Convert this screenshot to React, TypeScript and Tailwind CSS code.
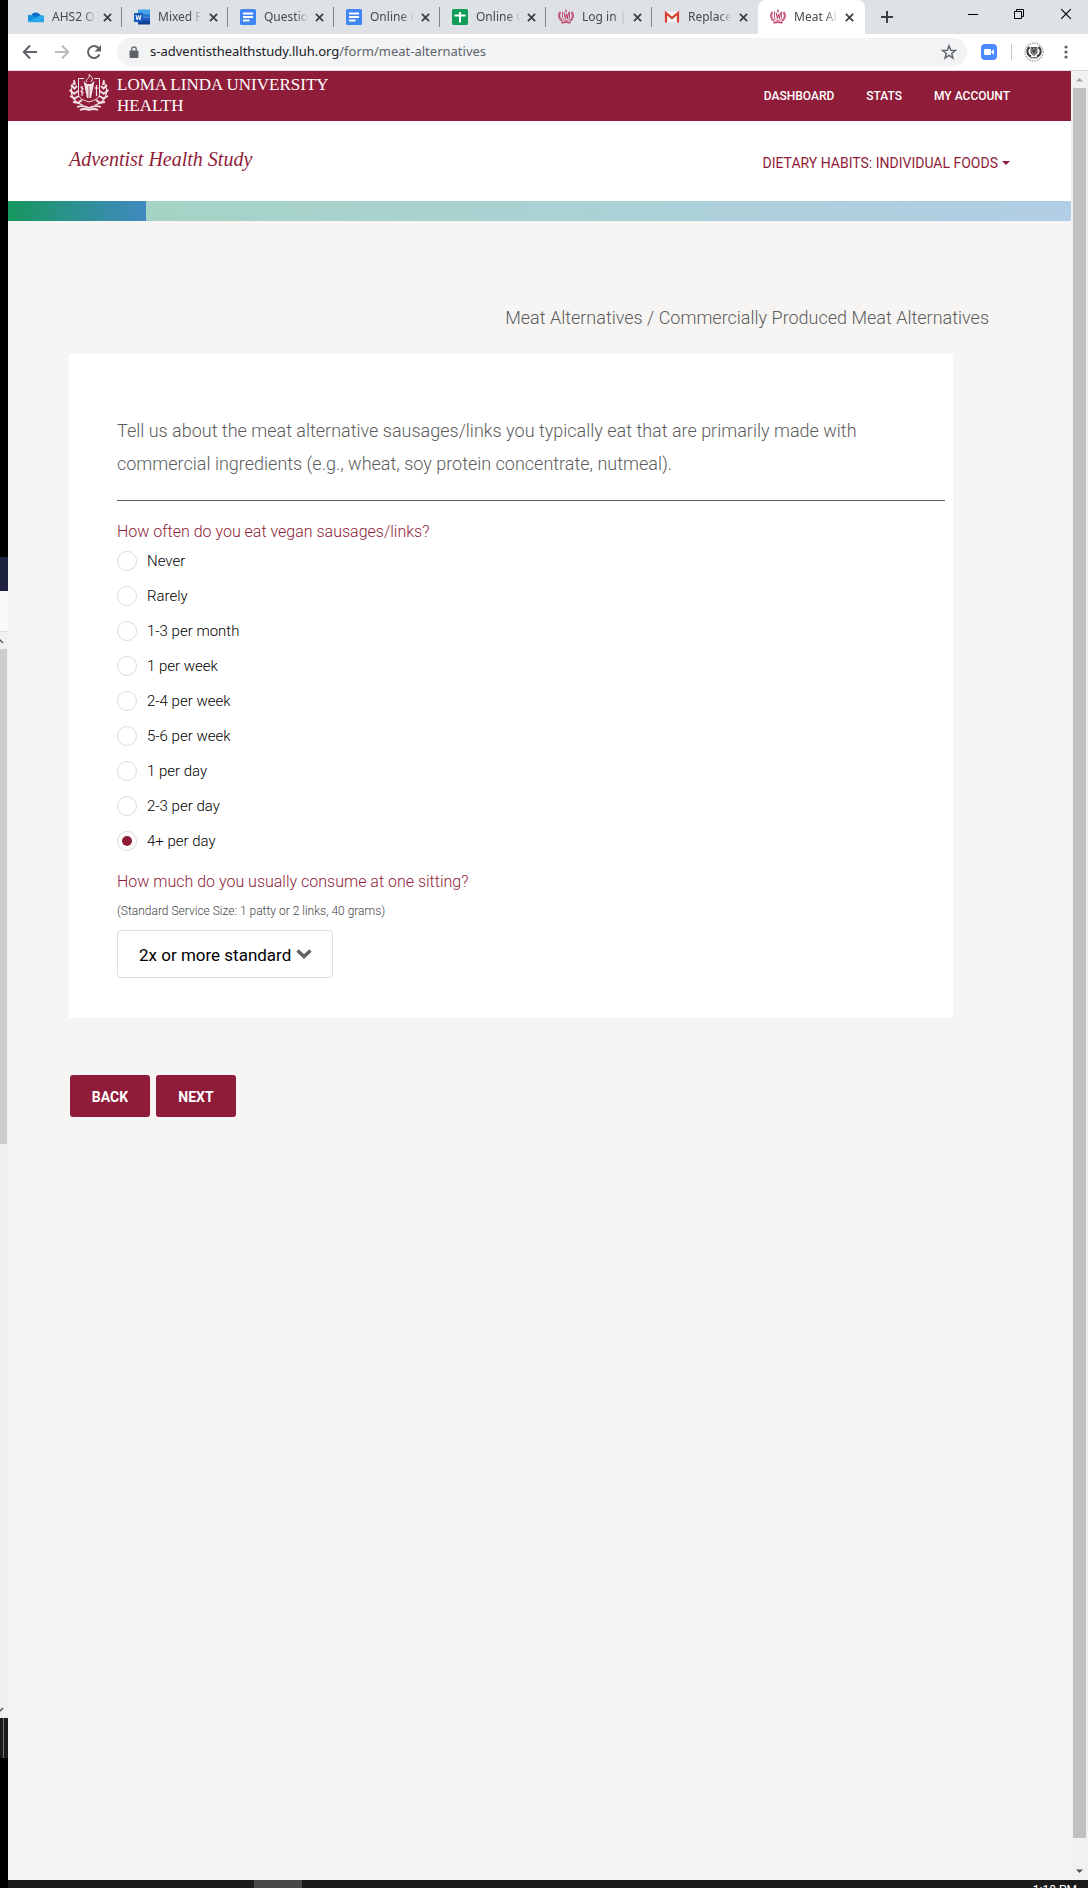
import { useState } from "react";
import type { ReactNode } from "react";

const frequencies = [
  "Never",
  "Rarely",
  "1-3 per month",
  "1 per week",
  "2-4 per week",
  "5-6 per week",
  "1 per day",
  "2-3 per day",
  "4+ per day",
];

const servings = ["Less than standard", "Standard", "2x or more standard"];

/* ---------- icons ---------- */

function Crest({ className }: { className?: string }) {
  return (
    <svg viewBox="0 0 40 38" className={className} fill="none" stroke="currentColor" aria-hidden="true">
      {/* laurel branches */}
      <path d="M5 8C0 17 2 28 14 31M35 8c5 9 3 20-9 23" strokeWidth="1.2" />
      <path
        d="M5 6l1 5M2 11l4 4M0.500 16l5 4M1 22l6 3M4 28l6 1M8 12l-3 3M9 17l-4 3M10 22l-4 2M13 26l-4 3M35 6l-1 5M38 11l-4 4M39.500 16l-5 4M39 22l-6 3M36 28l-6 1M32 12l3 3M31 17l4 3M30 22l4 2M27 26l4 3"
        strokeWidth="1.800"
      />
      {/* shield */}
      <path d="M15 4.500H9.500V20c0 4 4 6 10.500 8 6.500-2 10.500-4 10.500-8V4.500H25" strokeWidth="1" />
      {/* torch and flame */}
      <path d="M14.500 7l3.500 17h4l3.500-17-3.500 3h-4z" fill="currentColor" stroke="none" />
      <path d="M20 12v12" strokeWidth="0.800" className="stroke-[#8f1c39]" />
      <path d="M18 8c-3-3 4-3 2-7.500 4 2.500 4 5 2 7.500" strokeWidth="1" />
      {/* staff and cross */}
      <path d="M13 12v10M11.500 13l3 2M11.500 17l3 2M27.500 11v11M25.500 14h4" strokeWidth="1.200" />
      {/* ribbon */}
      <path d="M8 33c5-2 8-1 12 1 4-2 7-3 12-1M11 36c4-2 6-1 9 0 3-1 5-2 9 0" strokeWidth="1.800" />
    </svg>
  );
}

function CrestFavicon() {
  return (
    <svg viewBox="0 0 16 16" className="size-4 text-[#b8305a]" fill="none" stroke="currentColor" aria-hidden="true">
      <path d="M2.500 3C0 6 1 10.500 4.500 12M13.500 3c2.500 3 1.500 7.500-2 9" strokeWidth="2.200" opacity="0.750" />
      <path d="M4.500 2.500v6c0 1.500 1.500 2.500 3.500 3 2-.5 3.500-1.500 3.500-3v-6" strokeWidth="0.800" />
      <path d="M6 3.500l1.500 6L8.500 5l1 4.500L10.500 3.500" strokeWidth="1" />
      <path d="M8 0.500v3" strokeWidth="1.200" />
      <path d="M3.500 13.800c3-1 6-1 9 0" strokeWidth="1.800" opacity="0.850" />
    </svg>
  );
}

function OneDriveIcon() {
  return (
    <svg viewBox="1 2 14 12" className="size-4" aria-hidden="true">
      <path d="M4 6a4.500 4.500 0 0 1 8 1l-5 4z" fill="#0a6cc4" />
      <path d="M3.500 6.500A3 3 0 0 0 1 12l8-3-3-2.500z" fill="#1490df" />
      <path d="M11 7a3.200 3.200 0 0 1 3.500 5.500H2.500A3 3 0 0 1 1 12z" fill="#28a8ea" />
    </svg>
  );
}

function WordIcon() {
  return (
    <svg viewBox="0 0 16 16" className="size-4" aria-hidden="true">
      <rect x="4" y="0.500" width="12" height="4" fill="#41a5ee" />
      <rect x="4" y="4.500" width="12" height="4" fill="#2b7cd3" />
      <rect x="4" y="8.500" width="12" height="3.500" fill="#185abd" />
      <rect x="4" y="12" width="12" height="3.500" fill="#103f91" />
      <rect y="4" width="9" height="9" rx="0.500" fill="#185abd" />
      <path d="M2 6l1.200 5L4.500 6.500 5.800 11 7 6" fill="none" stroke="#fff" strokeWidth="1" />
    </svg>
  );
}

function DocsIcon() {
  return (
    <svg viewBox="0 0 16 16" className="size-4" aria-hidden="true">
      <rect width="16" height="16" rx="1.500" fill="#4285f4" />
      <path d="M3 4.500h10M3 8h10M3 11.500h6.500" stroke="#fff" strokeWidth="2" />
    </svg>
  );
}

function SheetsIcon() {
  return (
    <svg viewBox="0 0 16 16" className="size-4" aria-hidden="true">
      <rect width="16" height="16" rx="1.500" fill="#0f9d58" />
      <path d="M2.500 6.500h11M8 3v10.500" stroke="#fff" strokeWidth="2" />
    </svg>
  );
}

function GmailIcon() {
  return (
    <svg viewBox="0 0 16 16" className="size-4" aria-hidden="true">
      <rect x="1" y="2.500" width="14" height="11" rx="1" fill="#f2f2f2" />
      <path d="M2 13.500V4l6 5 6-5v9.500" fill="none" stroke="#d93f31" strokeWidth="2.200" />
    </svg>
  );
}

function CloseIcon({ className }: { className?: string }) {
  return (
    <svg viewBox="0 0 10 10" className={className} stroke="currentColor" aria-hidden="true">
      <path d="M1 1l8 8M9 1L1 9" fill="none" />
    </svg>
  );
}

/* ---------- browser chrome ---------- */

interface TabProps {
  icon: ReactNode;
  title: string;
  active?: boolean;
  divider?: boolean;
}

function Tab({ icon, title, active, divider }: TabProps) {
  return (
    <div
      className={
        active
          ? "flex h-full w-[107px] shrink-0 items-center rounded-t-lg bg-white pl-3"
          : "flex h-full w-[106px] shrink-0 items-center pl-3"
      }
    >
      {icon}
      <span className="ml-2 w-12 text-xs whitespace-nowrap text-[#45494d] [mask-image:linear-gradient(to_right,black_65%,transparent_92%)]">
        {title}
      </span>
      <button type="button" aria-label={`Close ${title}`} className="ml-[3px] text-[#3c4043]">
        <CloseIcon className="size-[9px] stroke-2" />
      </button>
      {divider && <span className="ml-auto h-5 w-px bg-[#808387]" />}
    </div>
  );
}

function TabStrip() {
  return (
    <div className="flex h-[34px] items-center bg-[#dee1e6] pl-2">
      <Tab icon={<OneDriveIcon />} title="AHS2 O" divider />
      <Tab icon={<WordIcon />} title="Mixed F" divider />
      <Tab icon={<DocsIcon />} title="Questio" divider />
      <Tab icon={<DocsIcon />} title="Online C" divider />
      <Tab icon={<SheetsIcon />} title="Online C" divider />
      <Tab icon={<CrestFavicon />} title="Log in |" divider />
      <Tab icon={<GmailIcon />} title="Replace" />
      <Tab icon={<CrestFavicon />} title="Meat Al" active />
      <button type="button" aria-label="New tab" className="ml-4 text-[#3c4043]">
        <svg viewBox="0 0 12 12" className="size-3" stroke="currentColor" strokeWidth="2">
          <path d="M6 0v12M0 6h12" />
        </svg>
      </button>
      <div className="ml-auto flex items-center gap-9 pr-4 pb-[6px] text-black">
        <button type="button" aria-label="Minimize">
          <svg viewBox="0 0 10 10" className="size-[10px]" stroke="currentColor">
            <path d="M0 5.500h10" />
          </svg>
        </button>
        <button type="button" aria-label="Restore">
          <svg viewBox="0 0 10 10" className="size-[10px]" fill="none" stroke="currentColor">
            <path d="M0.500 2.500h7v7h-7zM2.500 2.500v-2h7v7h-2" />
          </svg>
        </button>
        <button type="button" aria-label="Close window">
          <CloseIcon className="size-3 stroke-1" />
        </button>
      </div>
    </div>
  );
}

function AddressBar() {
  return (
    <div className="flex h-[37px] items-center border-b border-[#d5d7da] bg-white pr-5 pl-[14px] text-[#5f6368]">
      <button type="button" aria-label="Back">
        <svg viewBox="0 0 16 16" className="size-4" fill="none" stroke="currentColor" strokeWidth="2">
          <path d="M15 8H2M8 1.500L1.800 8 8 14.500" />
        </svg>
      </button>
      <button type="button" aria-label="Forward" className="ml-4 text-[#babcbe]">
        <svg viewBox="0 0 16 16" className="size-4" fill="none" stroke="currentColor" strokeWidth="2">
          <path d="M1 8h13M8 1.500L14.200 8 8 14.500" />
        </svg>
      </button>
      <button type="button" aria-label="Reload" className="ml-4">
        <svg viewBox="0 0 16 16" className="size-4" fill="none" stroke="currentColor" strokeWidth="2">
          <path d="M13.500 10.500A6 6 0 1 1 12.500 4" />
          <path d="M15 1v6.500H8.500z" fill="currentColor" stroke="none" />
        </svg>
      </button>
      <div className="ml-[15px] flex h-7 flex-1 items-center rounded-full bg-[#f1f3f4] pr-[10px] pl-3">
        <svg viewBox="0 0 10 12" className="h-3 w-[10px]" aria-hidden="true">
          <rect x="0.500" y="4.500" width="9" height="7.500" rx="1" fill="#5f6368" />
          <path d="M2.800 5V3a2.200 2.200 0 0 1 4.400 0v2" fill="none" stroke="#5f6368" strokeWidth="1.300" />
        </svg>
        <span className="ml-[11px] text-[13px]">
          <span className="text-[#202124]">s-adventisthealthstudy.lluh.org</span>/form/meat-alternatives
        </span>
        <button type="button" aria-label="Bookmark this page" className="ml-auto">
          <svg viewBox="0 0 16 16" className="size-4" fill="none" stroke="currentColor" strokeWidth="1.400">
            <path d="M8 1.800l1.700 4.500 4.700.2-3.700 3 1.300 4.600L8 11.400l-4 2.700 1.300-4.600-3.700-3 4.700-.2z" />
          </svg>
        </button>
      </div>
      <button type="button" aria-label="Zoom" className="ml-[14px]">
        <svg viewBox="0 0 16 16" className="size-4">
          <rect width="16" height="16" rx="4" fill="#4a8cff" />
          <rect x="3" y="5" width="7" height="6" rx="1.200" fill="#fff" />
          <path d="M10.500 7.200L13 5.300v5.400l-2.500-1.900z" fill="#fff" />
        </svg>
      </button>
      <span className="ml-[14px] h-4 w-px bg-[#c6c8ca]" />
      <button type="button" aria-label="Profile" className="ml-3">
        <svg viewBox="0 0 20 20" className="size-5" fill="none" stroke="#3a3a3a">
          <circle cx="10" cy="10" r="9" stroke="#aaa" strokeWidth="1.500" strokeDasharray="1.500 1" />
          <path d="M5.500 5C2 8 3 13 7 14.500M14.500 5c3.500 3 2.500 8-1.500 9.500" strokeWidth="2" />
          <path d="M7 5.500h6v5.500l-3 2.500L7 11z" fill="#999" strokeWidth="0.800" />
          <path d="M8.500 6l1 5 .500-3 .500 3 1-5M6.500 15.800h7" strokeWidth="1" />
        </svg>
      </button>
      <button type="button" aria-label="Menu" className="ml-5">
        <svg viewBox="0 0 4 16" className="h-4 w-1" fill="currentColor">
          <circle cx="2" cy="3" r="1.600" />
          <circle cx="2" cy="8" r="1.600" />
          <circle cx="2" cy="13" r="1.600" />
        </svg>
      </button>
    </div>
  );
}

/* sliver of the window sitting behind the browser */
function WindowBehind() {
  return (
    <div className="flex w-2 shrink-0 flex-col bg-black" aria-hidden="true">
      <div className="h-[557px]" />
      <div className="h-[34px] bg-[#1f2140]" />
      <div className="h-10 bg-[#fafafa]" />
      <div className="flex flex-1 flex-col border-t border-[#dcdcdc] bg-[#f0f0f0]">
        <svg viewBox="0 0 8 17" className="h-[17px] w-2" fill="none" stroke="#555" strokeWidth="1.500">
          <path d="M-1 7l4 4" />
        </svg>
        <div className="h-[495px] w-[7px] bg-[#cdcdcd]" />
        <svg viewBox="0 0 8 17" className="mt-auto h-[17px] w-2" fill="none" stroke="#555" strokeWidth="1.500">
          <path d="M-1 11l4-4" />
        </svg>
      </div>
      <div className="h-10 bg-[#1b1b1b] pl-[3px]">
        <div className="h-full w-px bg-[#777]" />
      </div>
      <div className="h-[130px]" />
    </div>
  );
}

function Scrollbar() {
  return (
    <div className="flex w-[17px] shrink-0 flex-col items-center bg-[#f1f1f1]" aria-hidden="true">
      <svg viewBox="0 0 17 17" className="size-[17px]">
        <path d="M5 10.500h7L8.500 7z" fill="#a3a3a3" />
      </svg>
      <div className="w-[13px] flex-1 bg-[#c1c1c1]" />
      <svg viewBox="0 0 17 17" className="mt-[25px] size-[17px]">
        <path d="M5 6.500h7L8.500 10z" fill="#505050" />
      </svg>
    </div>
  );
}

/* ---------- site ---------- */

function SiteHeader() {
  return (
    <header>
      <div className="flex h-[50px] items-center justify-between bg-[#8f1c39] px-[61px] text-white">
        <a href="#home" className="flex h-full items-start gap-2 pt-[3px]">
          <Crest className="h-[38px] w-10 text-[#f3e3e7]" />
          <span className="font-['Liberation_Serif',serif] text-[17px] leading-[21px]">
            LOMA LINDA UNIVERSITY
            <br />
            HEALTH
          </span>
        </a>
        <nav className="flex gap-8 text-xs font-medium">
          <a href="#dashboard">DASHBOARD</a>
          <a href="#stats">STATS</a>
          <a href="#account">MY ACCOUNT</a>
        </nav>
      </div>
      <div className="flex h-20 items-center justify-between bg-white px-[61px] text-[#8f1c39]">
        <a href="#study" className="pb-1 font-['Liberation_Serif',serif] text-xl italic">
          Adventist Health Study
        </a>
        <button type="button" className="flex items-center gap-1 pt-1 text-sm">
          DIETARY HABITS: INDIVIDUAL FOODS
          <svg viewBox="0 0 8 4" className="h-1 w-2" fill="currentColor" aria-hidden="true">
            <path d="M0 0h8L4 4z" />
          </svg>
        </button>
      </div>
      <div className="h-5 bg-linear-to-r from-[#a2d4c0] to-[#b2cee6]">
        <div className="h-full w-[13%] bg-linear-to-r from-[#16965c] to-[#4088c0]" />
      </div>
    </header>
  );
}

function QuestionCard() {
  const [frequency, setFrequency] = useState("4+ per day");
  const [serving, setServing] = useState("2x or more standard");

  return (
    <section className="mr-[57px] bg-white pt-[60px] pr-2 pb-10 pl-12">
      <p className="max-w-[760px] text-lg leading-[33px] font-light text-[#5c5c5c]">
        Tell us about the meat alternative sausages/links you typically eat that are primarily made with
        commercial ingredients (e.g., wheat, soy protein concentrate, nutmeal).
      </p>
      <hr className="mt-5 border-[#636363]" />

      <fieldset className="mt-[19px]">
        <legend className="text-base leading-6 font-light text-[#8f1c39]">
          How often do you eat vegan sausages/links?
        </legend>
        <div className="mt-[7px] flex flex-col items-start gap-[15px]">
          {frequencies.map((item) => (
            <label key={item} className="flex h-5 items-center gap-[10px] text-[15px] font-light text-black">
              <input
                type="radio"
                name="frequency"
                value={item}
                checked={frequency === item}
                onChange={() => setFrequency(item)}
                className="grid size-5 appearance-none place-items-center rounded-full border border-[#dcdcdc] bg-white before:size-[10px] before:rounded-full before:content-[''] checked:before:bg-[#8f1c39]"
              />
              {item}
            </label>
          ))}
        </div>
      </fieldset>

      <label htmlFor="serving" className="mt-[19px] block text-base leading-6 font-light text-[#8f1c39]">
        How much do you usually consume at one sitting?
      </label>
      <p className="mt-[7px] text-xs leading-5 font-light text-[#444]">
        (Standard Service Size: 1 patty or 2 links, 40 grams)
      </p>
      <div className="relative mt-[9px] w-[216px]">
        <select
          id="serving"
          value={serving}
          onChange={(e) => setServing(e.target.value)}
          className="h-12 w-full appearance-none rounded border border-[#dedede] bg-white pt-1 pl-[21px] text-[17px] text-black"
        >
          {servings.map((item) => (
            <option key={item}>{item}</option>
          ))}
        </select>
        <svg
          viewBox="0 0 16 10"
          className="pointer-events-none absolute top-[19px] right-[21px] h-[10px] w-4"
          fill="none"
          stroke="#636363"
          strokeWidth="3.500"
          aria-hidden="true"
        >
          <path d="M1.500 1.500L8 7.500l6.500-6" />
        </svg>
      </div>
    </section>
  );
}

function Taskbar() {
  return (
    <div className="flex h-2 items-start overflow-hidden bg-[#1b1b1b]">
      <div className="ml-[246px] h-full w-12 bg-[#484848]" />
      <span className="mt-1 mr-[11px] ml-auto text-xs leading-3 text-white">1:18 PM</span>
    </div>
  );
}

export default function App() {
  return (
    <div className="flex min-h-screen font-['Roboto',sans-serif]">
      <WindowBehind />
      <div className="flex min-w-0 flex-1 flex-col">
        <div className="font-['Noto_Sans',sans-serif]">
          <TabStrip />
          <AddressBar />
        </div>
        <div className="flex flex-1">
          <div className="min-w-0 flex-1 bg-[#f6f5f3]">
            <SiteHeader />
            <main className="px-[61px] pt-20">
              <h1 className="pr-[21px] text-right text-lg leading-[33px] font-light text-[#5c5c5c]">
                Meat Alternatives / Commercially Produced Meat Alternatives
              </h1>
              <div className="mt-5">
                <QuestionCard />
              </div>
              <div className="mt-[57px] flex gap-[6px] pl-px text-sm font-bold text-white">
                <button type="button" className="h-[42px] w-20 rounded-[3px] bg-[#8f1c39] pt-[2px]">
                  BACK
                </button>
                <button type="button" className="h-[42px] w-20 rounded-[3px] bg-[#8f1c39] pt-[2px]">
                  NEXT
                </button>
              </div>
            </main>
          </div>
          <Scrollbar />
        </div>
        <Taskbar />
      </div>
    </div>
  );
}
